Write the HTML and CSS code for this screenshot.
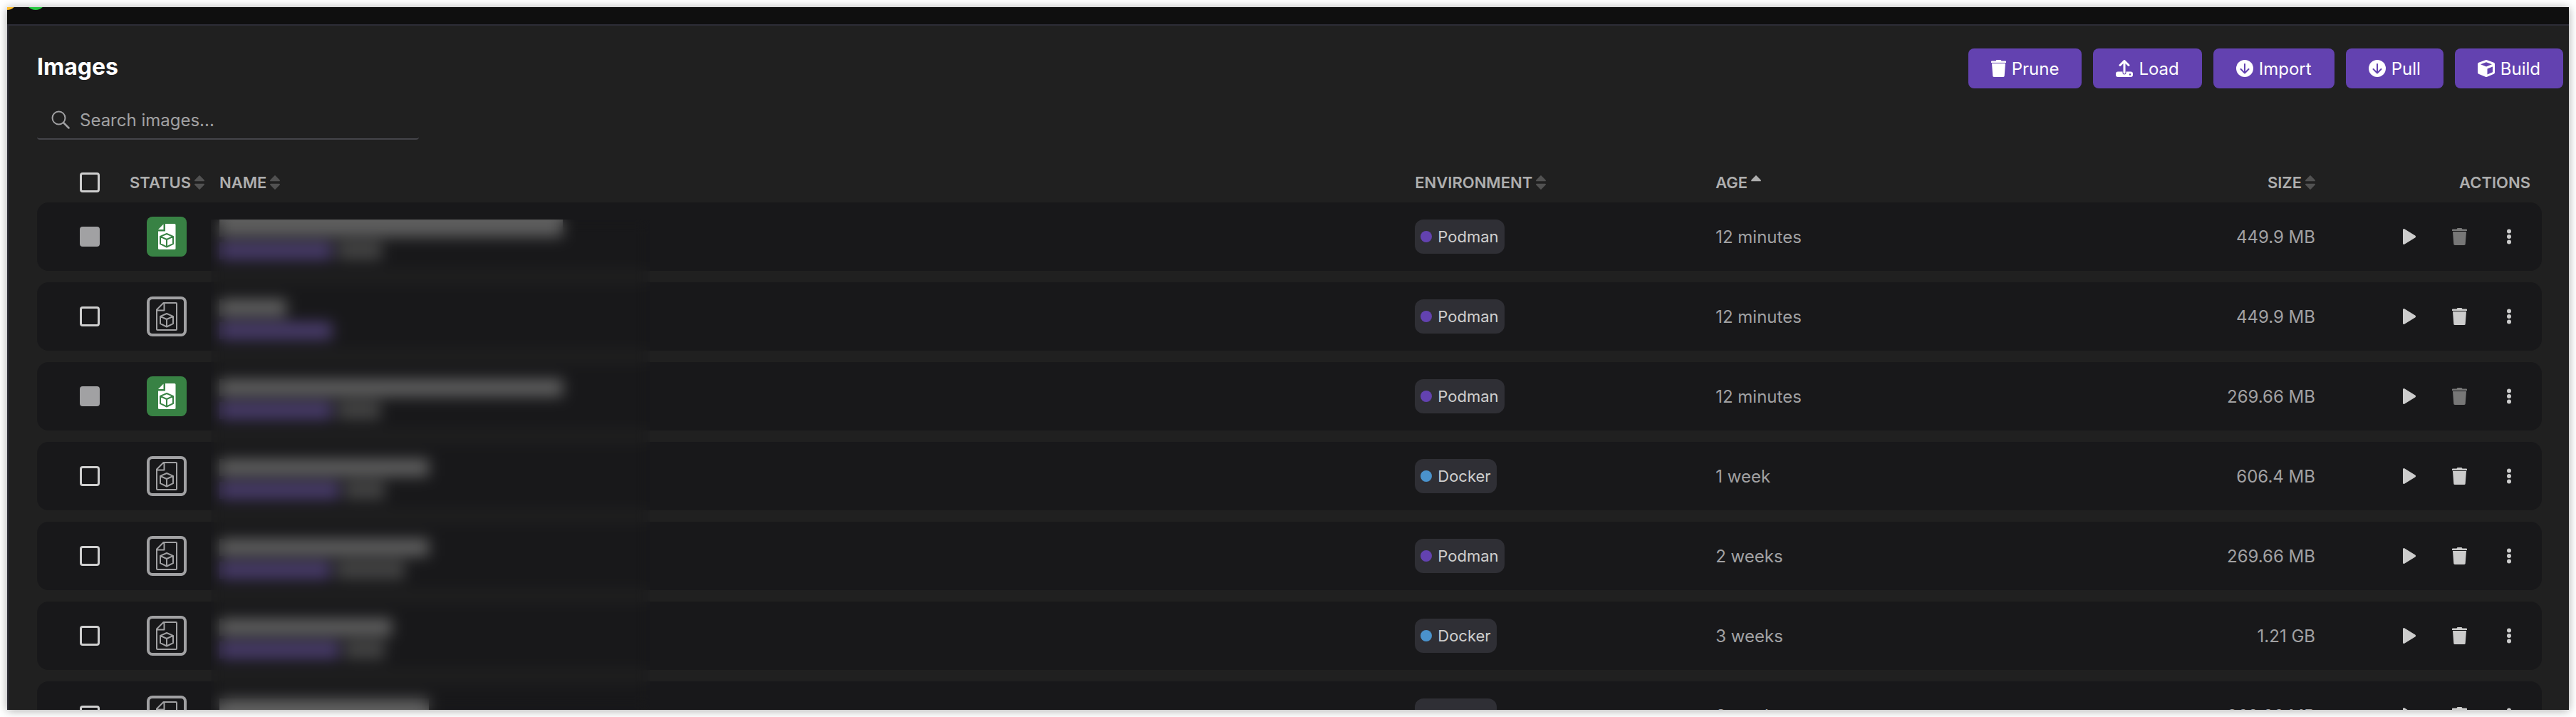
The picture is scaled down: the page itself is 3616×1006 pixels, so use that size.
FILE: index.html
```
<!DOCTYPE html>
<html lang="en">
<head>
    <meta charset="UTF-8">
    <meta name="viewport" content="width=device-width, initial-scale=1.0">
    <title>Images</title>
    <link rel="stylesheet" href="styles.css">
</head>
<body>

<!-- Icon definitions -->
<svg class="sprite" aria-hidden="true">
    <symbol id="icon-trash" viewBox="0 0 21 24">
        <path d="M1 1.500h5.500L7.500 0h6l1 1.500H20a1 1 0 0 1 1 1V4H0V2.500a1 1 0 0 1 1-1z"/>
        <path d="M1 5h19l-1.300 17.500a1.600 1.600 0 0 1-1.600 1.500H3.900a1.600 1.600 0 0 1-1.600-1.500z"/>
    </symbol>
    <symbol id="icon-load" viewBox="0 0 24 24">
        <path d="M3 16.500h6.500V18a2.500 2.500 0 0 0 5 0v-1.500H21a3 3 0 0 1 3 3V21a3 3 0 0 1-3 3H3a3 3 0 0 1-3-3v-1.500a3 3 0 0 1 3-3zM20 19.300a1.200 1.200 0 1 0 0 2.400 1.200 1.200 0 0 0 0-2.400z" fill-rule="evenodd"/>
        <path d="M12 18V2M6 7.500l6-6 6 6" fill="none" stroke="currentColor" stroke-width="3" stroke-linecap="round" stroke-linejoin="round"/>
    </symbol>
    <symbol id="icon-down" viewBox="0 0 24 24">
        <circle cx="12" cy="12" r="12"/>
        <path class="cut" d="M12 6v12.500M6.500 13l5.500 5.500 5.500-5.500" fill="none" stroke-width="2" stroke-linecap="round" stroke-linejoin="round"/>
    </symbol>
    <symbol id="icon-cube" viewBox="0 0 24 24">
        <path fill-rule="evenodd" d="M11 .3a3 3 0 0 1 2 0l9.500 3.500A2.300 2.300 0 0 1 24 6v11.700a2.300 2.300 0 0 1-1.300 2.100l-9.500 4a3 3 0 0 1-2.400 0l-9.500-4A2.300 2.300 0 0 1 0 17.700V6a2.300 2.300 0 0 1 1.500-2.200zM12 3.300L4 6.300l8 3.200 8-3.200zM13.500 12.500v8l7.500-3.300V9.500z"/>
    </symbol>
    <symbol id="icon-search" viewBox="0 0 26 26">
        <circle cx="10.500" cy="10.500" r="9" fill="none" stroke="currentColor" stroke-width="2"/>
        <path d="M17 17l7.500 7.500" fill="none" stroke="currentColor" stroke-width="2.500" stroke-linecap="round"/>
    </symbol>
    <symbol id="icon-play" viewBox="0 0 18 22">
        <path d="M0 1.500A1.400 1.400 0 0 1 2.200.3l15 9.300a1.600 1.600 0 0 1 0 2.800l-15 9.300A1.400 1.400 0 0 1 0 20.500z"/>
    </symbol>
    <symbol id="icon-more" viewBox="0 0 6 22">
        <circle cx="3" cy="3.500" r="3"/>
        <circle cx="3" cy="11" r="3"/>
        <circle cx="3" cy="18.500" r="3"/>
    </symbol>
    <symbol id="icon-sort" viewBox="0 0 14 20">
        <path d="M6.300.4a1 1 0 0 1 1.400 0l5.900 6.200c.7.700.3 1.700-.6 1.700H1c-.9 0-1.300-1-.6-1.700z"/>
        <path d="M6.300 19.600a1 1 0 0 0 1.400 0l5.900-6.200c.7-.7.300-1.700-.6-1.700H1c-.9 0-1.300 1-.6 1.700z"/>
    </symbol>
    <symbol id="icon-image-used" viewBox="0 0 56 56">
        <path d="M26 10h13a1.500 1.500 0 0 1 1.500 1.500v33A1.500 1.500 0 0 1 39 46H17.500a1.500 1.500 0 0 1-1.500-1.500V20.500h10z"/>
        <path d="M23.500 10.500V18H16z"/>
        <path class="cut" d="M28 24l9 3.800v10.400L28 42.500l-9-4.300V27.800zM19 27.800l9 4.200 9-4.200M28 32v10" fill="none" stroke-width="2" stroke-linejoin="round"/>
    </symbol>
    <symbol id="icon-image" viewBox="0 0 56 56">
        <path d="M23.500 9H41a1 1 0 0 1 1 1v36a1 1 0 0 1-1 1H15a1 1 0 0 1-1-1V18.500zM24.500 9v10.500H14M28 24l9 3.800v10.400L28 42.500l-9-4.300V27.800zM19 27.800l9 4.200 9-4.200M28 32v10" fill="none" stroke="currentColor" stroke-width="2" stroke-linejoin="round"/>
    </symbol>
</svg>

<div class="window">
    <header class="titlebar">
        <svg class="lights" viewBox="0 0 60 4" aria-hidden="true">
            <circle cx="0" cy="-10" r="14" fill="#febc2e"/>
            <circle cx="40" cy="-10" r="14" fill="#28c840"/>
        </svg>
    </header>

    <main class="content">
        <div class="page-header">
            <h1>Images</h1>
            <div class="toolbar">
                <button class="btn"><svg class="trash"><use href="#icon-trash"/></svg>Prune</button>
                <button class="btn"><svg><use href="#icon-load"/></svg>Load</button>
                <button class="btn"><svg><use href="#icon-down"/></svg>Import</button>
                <button class="btn"><svg><use href="#icon-down"/></svg>Pull</button>
                <button class="btn"><svg><use href="#icon-cube"/></svg>Build</button>
            </div>
        </div>

        <label class="search">
            <svg><use href="#icon-search"/></svg>
            <input type="text" placeholder="Search images..." aria-label="Search images">
        </label>

        <div class="table-wrap">
            <table>
                <thead>
                    <tr>
                        <th class="col-check"><input type="checkbox" aria-label="Toggle all"></th>
                        <th class="col-status"><span class="sortable">STATUS<svg><use href="#icon-sort"/></svg></span></th>
                        <th class="col-name"><span class="sortable">NAME<svg><use href="#icon-sort"/></svg></span></th>
                        <th class="col-env"><span class="sortable">ENVIRONMENT<svg><use href="#icon-sort"/></svg></span></th>
                        <th class="col-age"><span class="sortable asc">AGE<svg><use href="#icon-sort"/></svg></span></th>
                        <th class="col-size"><span class="sortable">SIZE<svg><use href="#icon-sort"/></svg></span></th>
                        <th class="col-actions">ACTIONS</th>
                    </tr>
                </thead>
                <tbody id="imageRows"></tbody>
            </table>
            <div class="privacy-blur"></div>
        </div>
    </main>
</div>

<script>
    // name, id and tag are the widths of the hidden texts
    const images = [
        { used: true, name: 482, id: 158, tag: 62, env: 'Podman', age: '12 minutes', size: '449.9 MB' },
        { used: false, name: 94, id: 158, tag: 0, env: 'Podman', age: '12 minutes', size: '449.9 MB' },
        { used: true, name: 482, id: 158, tag: 60, env: 'Podman', age: '12 minutes', size: '269.66 MB' },
        { used: false, name: 294, id: 168, tag: 56, env: 'Docker', age: '1 week', size: '606.4 MB' },
        { used: false, name: 294, id: 156, tag: 96, env: 'Podman', age: '2 weeks', size: '269.66 MB' },
        { used: false, name: 242, id: 168, tag: 56, env: 'Docker', age: '3 weeks', size: '1.21 GB' },
        { used: false, name: 294, id: 168, tag: 56, env: 'Docker', age: '3 weeks', size: '269.66 MB' }
    ];

    document.getElementById('imageRows').innerHTML = images.map((image, i) => `
        <tr>
            <td class="col-check"><input type="checkbox" aria-label="Select image ${i + 1}" ${image.used ? 'disabled' : ''}></td>
            <td class="col-status">
                <svg class="status ${image.used ? 'used' : ''}"><use href="#icon-image${image.used ? '-used' : ''}"/></svg>
            </td>
            <td class="col-name">
                <div class="hidden-name" style="width: ${image.name}px"></div>
                <div class="hidden-meta">
                    <span class="hidden-id" style="width: ${image.id}px"></span>
                    <span class="hidden-tag" style="width: ${image.tag}px"></span>
                </div>
            </td>
            <td><span class="badge"><span class="dot ${image.env.toLowerCase()}"></span>${image.env}</span></td>
            <td>${image.age}</td>
            <td class="col-size">${image.size}</td>
            <td class="col-actions">
                <div class="actions">
                    <button aria-label="Run image"><svg class="play"><use href="#icon-play"/></svg></button>
                    <button aria-label="Delete image" ${image.used ? 'disabled' : ''}><svg class="trash"><use href="#icon-trash"/></svg></button>
                    <button aria-label="More actions"><svg class="more"><use href="#icon-more"/></svg></button>
                </div>
            </td>
        </tr>
    `).join('');
</script>

</body>
</html>
```
FILE: styles.css
```
* {
    box-sizing: border-box;
}

body {
    margin: 0;
    padding: 10px;
    height: 100vh;
    overflow: hidden;
    background-color: #fff;
    font-family: Inter, "Liberation Sans", sans-serif;
    font-size: 24px;
    color: #a1a1a3;
}

svg {
    display: block;
    fill: currentColor;
}

button, input {
    font: inherit;
    color: inherit;
}

.sprite {
    position: absolute;
    width: 0;
    height: 0;
}

.window {
    display: flex;
    flex-direction: column;
    height: 100%;
    overflow: hidden;
    background-color: #202020;
    box-shadow: 0 1px 12px rgba(0, 0, 0, 0.35);
}

.titlebar {
    flex: none;
    height: 26px;
    background-color: #0f0f0f;
    border-bottom: 2px solid #2d2d36;
}

.lights {
    width: 60px;
    height: 4px;
}

.content {
    flex: 1;
    min-height: 0;
    border-left: 2px solid #2d2d36;
}

.page-header {
    display: flex;
    justify-content: space-between;
    align-items: flex-start;
    padding: 32px 8px 0 40px;
}

h1 {
    margin: 6px 0 0;
    font-size: 32px;
    line-height: 40px;
    font-weight: 700;
    color: #fff;
}

.toolbar {
    display: flex;
    gap: 16px;
}

.btn {
    display: flex;
    align-items: center;
    gap: 8px;
    height: 56px;
    padding: 0 32px;
    border: none;
    border-radius: 8px;
    background-color: #6342b0;
    color: #fff;
    cursor: pointer;
}

.btn svg {
    width: 24px;
    height: 24px;
}

.btn .trash {
    width: 21px;
}

/* Inner lines of the filled icons take the colour behind them */
.cut {
    stroke: #6342b0;
}

.search {
    display: flex;
    align-items: center;
    gap: 14px;
    width: 536px;
    height: 56px;
    margin: 16px 0 0 40px;
    padding: 2px 20px 0;
    border-bottom: 2px solid #45454a;
    border-radius: 4px;
}

.search svg {
    flex: none;
    width: 26px;
    height: 26px;
}

.search input {
    flex: 1;
    min-width: 0;
    padding: 0;
    border: none;
    outline: none;
    background: none;
}

.search input::placeholder {
    color: #a1a1a3;
}

.table-wrap {
    position: relative;
    margin: 32px 38px 0 40px;
}

table {
    width: 100%;
    table-layout: fixed;
    border-collapse: separate;
    border-spacing: 0 16px;
}

th {
    height: 24px;
    padding: 0;
    font-size: 22px;
    line-height: 24px;
    font-weight: 600;
    text-align: left;
    color: #aeaeae;
}

td {
    height: 96px;
    padding: 0;
    background-color: #18181a;
}

td:first-child {
    border-radius: 16px 0 0 16px;
}

td:last-child {
    border-radius: 0 16px 16px 0;
}

.col-check {
    width: 130px;
    padding-left: 60px;
}

.col-status {
    width: 126px;
}

td.col-status {
    padding-left: 24px;
}

td.col-name {
    padding-top: 8px;
}

.col-env, .col-age, .col-size {
    width: 12%;
}

.col-size {
    padding-right: 2px;
    text-align: right;
}

.col-actions {
    width: 316px;
    padding-right: 16px;
    text-align: right;
}

.sortable {
    display: inline-flex;
    align-items: center;
    gap: 5px;
}

.sortable svg {
    width: 14px;
    height: 20px;
    color: #515151;
}

.asc svg {
    color: #aeaeae;
    clip-path: inset(0 0 10px 0);
}

input[type="checkbox"] {
    appearance: none;
    display: block;
    width: 28px;
    height: 28px;
    margin: -2px 0;
    border: 3px solid #cfcfcf;
    border-radius: 4px;
}

input[type="checkbox"]:disabled {
    border-color: #a1a1a3;
    background-color: #a1a1a3;
}

.status {
    width: 56px;
    height: 56px;
    border-radius: 8px;
    box-shadow: inset 0 0 0 4px #a1a1a3;
}

.status.used {
    background-color: #388244;
    box-shadow: none;
    color: #fff;
}

#icon-image-used .cut {
    stroke: #388244;
}

.hidden-name {
    height: 24px;
    margin-bottom: 8px;
    background-color: #606060;
}

.hidden-meta {
    display: flex;
    gap: 8px;
}

.hidden-id, .hidden-tag {
    height: 24px;
    background-color: #493c6c;
}

.hidden-tag {
    background-color: #454545;
}

/* Covers the image names from the first row down */
.privacy-blur {
    position: absolute;
    top: 80px;
    bottom: 0;
    left: 244px;
    width: 616px;
    backdrop-filter: blur(10px);
}

.badge {
    display: inline-flex;
    align-items: center;
    gap: 8px;
    height: 48px;
    padding: 0 8px;
    border-radius: 12px;
    background-color: #2f2f35;
    font-size: 22px;
    color: #cfcfcf;
    vertical-align: middle;
}

.dot {
    width: 16px;
    height: 16px;
    border-radius: 50%;
}

.dot.podman {
    background-color: #6342b0;
}

.dot.docker {
    background-color: #4a92cc;
}

.actions {
    display: flex;
    justify-content: flex-end;
    gap: 10px;
}

.actions button {
    display: flex;
    align-items: center;
    justify-content: center;
    width: 60px;
    height: 48px;
    padding: 0;
    border: none;
    background: none;
    color: #cccccc;
    cursor: pointer;
}

.actions button:disabled {
    color: #777777;
    cursor: default;
}

.actions .play {
    width: 18px;
    height: 22px;
}

.actions .trash {
    width: 21px;
    height: 24px;
}

.actions .more {
    width: 6px;
    height: 22px;
}
```
